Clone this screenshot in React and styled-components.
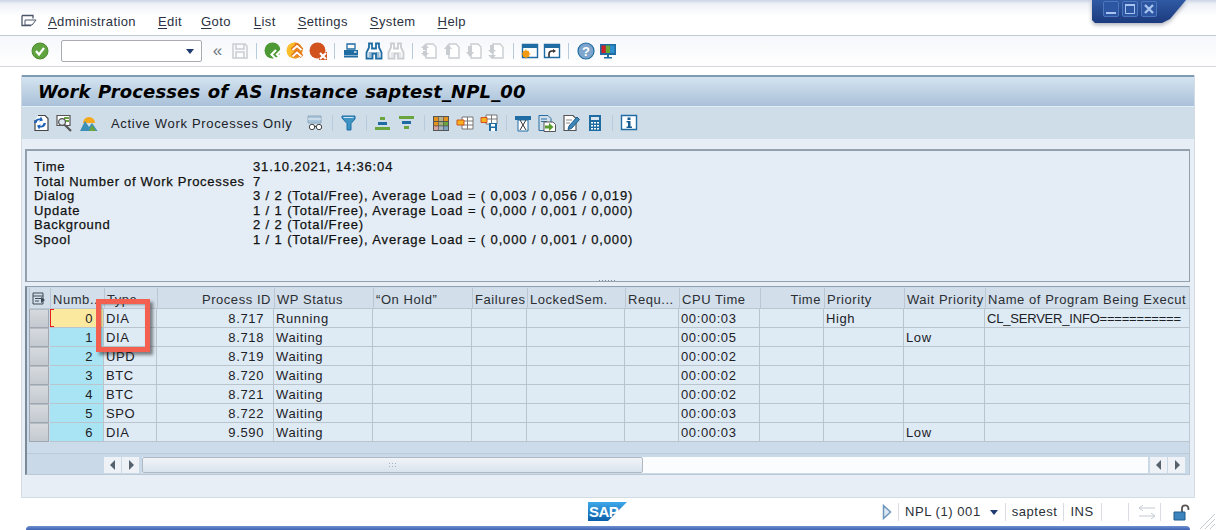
import React from 'react'
import styled, { createGlobalStyle } from 'styled-components'

const GlobalStyle = createGlobalStyle`
  html, body { margin: 0; padding: 0; background: #fff; overflow: hidden; }
  body { font-family: "Liberation Sans", Arial, sans-serif; font-size: 13px; color: #111; }
`

const COLS = '21px 54px 53px 117px 99px 99px 55px 98px 54px 81px 64px 80px 81px 205px'

const Page = styled.div`
  width: 1216px;
  height: 530px;
  display: flex;
  flex-direction: column;
  position: relative;
  overflow: hidden;
`

const MenuBar = styled.div`
  height: 36px;
  flex: none;
  box-sizing: border-box;
  padding: 7px 0 0 21px;
  display: flex;
  align-items: center;
  border-bottom: 1px solid #c3cbd9;
  background: linear-gradient(#ccd5e6 0, #eef1f7 4px, #fff 16px, #fff 100%);
`

const MenuGlyph = styled.span`
  display: flex;
  width: 27px;
`

const MenuItem = styled.span`
  margin-right: ${p => p.$gap}px;
  letter-spacing: 0.4px;
  color: #2a3142;
  u { text-underline-offset: 2px; }
`

const Toolbar = styled.div`
  height: 31px;
  flex: none;
  box-sizing: border-box;
  padding-left: ${p => p.$left}px;
  display: flex;
  align-items: center;
  border-bottom: 1px solid #d3d6de;
  background: linear-gradient(#f6f7fb, #fff);
`

const Slot = styled.span`
  width: 22.4px;
  height: 20px;
  flex: none;
  display: flex;
  align-items: center;
  justify-content: center;
`

const Sep = styled.span`
  width: 1px;
  height: 16px;
  margin: 0 ${p => p.$m || 5}px;
  flex: none;
  background: #b7cbdd;
`

const CommandField = styled.div`
  width: 141px;
  height: 22px;
  margin: 0 4px 0 10px;
  flex: none;
  box-sizing: border-box;
  border: 1px solid #a9adb3;
  border-radius: 2px;
  background: #fff;
  display: flex;
  align-items: center;
  justify-content: flex-end;
  padding-right: 7px;
`

const DropArrow = styled.span`
  width: 0;
  height: 0;
  flex: none;
  border-left: 4px solid transparent;
  border-right: 4px solid transparent;
  border-top: 5px solid #1f3a6e;
`

const Chevrons = styled.span`
  width: 22px;
  flex: none;
  text-align: center;
  font-size: 17px;
  line-height: 18px;
  color: #6f7780;
`

const Screen = styled.main`
  flex: 1;
  min-height: 0;
  margin: 8px 21px 0;
  width: 1174px;
  display: flex;
  flex-direction: column;
  box-sizing: border-box;
  border: 1px solid #d5dbe3;
  border-top: 0;
  background: #e8eef6;
`

const TitleBar = styled.h1`
  margin: 0;
  height: 31px;
  flex: none;
  box-sizing: border-box;
  border-top: 2px solid #7f9ab4;
  padding: 2px 0 0 16px;
  background: linear-gradient(#d4e3ef, #a9c1d9);
  font: italic bold 18px "DejaVu Sans", sans-serif;
  letter-spacing: 0.13px;
  word-spacing: 1px;
  line-height: 25px;
  color: #000;
  white-space: nowrap;
`

const AppBar = styled.div`
  height: 33px;
  flex: none;
  box-sizing: border-box;
  padding: 0 0 1px 7px;
  display: flex;
  align-items: center;
  border-top: 1px solid #e3edf5;
  background: #cedde8;
`

const BarSlot = styled(Slot)`
  width: 24px;
`

const BarText = styled.span`
  width: 202px;
  flex: none;
  padding: 2px 0 0 10px;
  box-sizing: border-box;
  letter-spacing: 0.68px;
  color: #1c2126;
`

const InfoBox = styled.section`
  height: 133px;
  flex: none;
  margin: 10px 4px 0 3px;
  box-sizing: border-box;
  border: 1px solid #93a1ae;
  border-top-width: 2px;
  border-left-width: 2px;
  padding: 9px 0 0 7px;
  background: #e4edf5;
  position: relative;
`

const InfoRow = styled.div`
  display: grid;
  grid-template-columns: 219px 1fr;
  height: 14.6px;
  line-height: 14.6px;
  white-space: pre;
  -webkit-text-stroke: 0.25px #111;
`

const InfoKey = styled.span`
  letter-spacing: 0.7px;
`

const InfoValue = styled.span`
  letter-spacing: 0.87px;
`

const Sash = styled.span`
  position: absolute;
  left: 571px;
  bottom: -1px;
  width: 18px;
  height: 3px;
  background: radial-gradient(circle, #7d8a96 0.7px, transparent 1px) 0 0 / 3px 3px;
`

const GridFrame = styled.section`
  height: 189px;
  flex: none;
  margin: 4px 4px 0 3px;
  box-sizing: border-box;
  border-top: 1px solid #93a1ae;
  border-left: 2px solid #7a8a99;
  border-right: 1px solid #bcc8d4;
  border-bottom: 1px solid #bcc8d4;
  padding: 1px 0 0 2px;
  background: #cbdbe9;
  overflow: hidden;
`

const HeadRow = styled.div`
  display: grid;
  grid-template-columns: ${COLS};
  height: 21px;
`

const HeadCell = styled.div`
  box-sizing: border-box;
  padding: 0 ${p => (p.$right ? 3 : 1)}px 0 2px;
  line-height: 23px;
  text-align: ${p => (p.$right ? 'right' : 'left')};
  letter-spacing: 0.55px;
  white-space: nowrap;
  overflow: hidden;
  color: #2b2f33;
  background: #d2deea;
  border-left: 1px solid #bac6d2;
  border-bottom: 1px solid #bac6d2;
`

const DataRow = styled.div`
  display: grid;
  grid-template-columns: ${COLS};
  height: 19px;
`

const RowButton = styled.div`
  box-sizing: border-box;
  margin-right: 1px;
  border: 1px solid #9fa8b0;
  border-top-color: #b4bcc3;
  background: linear-gradient(#d6dadf, #c3c9cf);
`

const Cell = styled.div`
  box-sizing: border-box;
  padding: 0 ${p => (p.$right ? 9 : 1)}px 0 2px;
  line-height: 20px;
  text-align: ${p => (p.$right ? 'right' : 'left')};
  letter-spacing: 0.62px;
  white-space: nowrap;
  overflow: hidden;
  color: #1d2125;
  background: #deebf5;
  border-right: 1px solid #b9c4cd;
  border-bottom: 1px solid #b9c4cd;
`

const ProgramCell = styled(Cell)`
  letter-spacing: -0.2px;
`

const KeyCell = styled(Cell)`
  position: relative;
  padding-right: 10px;
  text-align: right;
  background: ${p => (p.$current ? '#fbe9a0' : '#a8e4f4')};
`

const CursorMark = styled.span`
  position: absolute;
  left: 0;
  top: 0;
  bottom: 0;
  width: 3px;
  border: 1px solid #e5201c;
  border-right: 0;
  background: transparent;
  clip-path: polygon(0 0, 100% 0, 100% 3px, 2px 3px, 2px calc(100% - 3px), 100% calc(100% - 3px), 100% 100%, 0 100%);
`

const ScrollRow = styled.div`
  height: 22px;
  margin: 11px 0 0 -2px;
  box-sizing: border-box;
  padding: 2px 3px 2px 77px;
  border-top: 1px solid #bccad7;
  display: flex;
  align-items: center;
  background: #c9d9e7;
`

const ScrollBtn = styled.span`
  width: 17px;
  height: 16px;
  margin-right: 1px;
  flex: none;
  display: flex;
  align-items: center;
  justify-content: center;
  background: #eef2f7;
`

const Track = styled.div`
  flex: 1;
  height: 16px;
  margin: 0 2px 0 2px;
  display: flex;
  background: #fbfcfd;
`

const Thumb = styled.div`
  width: 501px;
  box-sizing: border-box;
  border: 1px solid #aeb9c4;
  border-radius: 2px;
  background: linear-gradient(#f0f4f8, #d9e3ec);
  display: flex;
  align-items: center;
  justify-content: center;
`

const Grip = styled.span`
  width: 9px;
  height: 6px;
  background: radial-gradient(circle, #a3afba 0.7px, transparent 1px) 0 0 / 3px 3px;
`

const StatusBar = styled.footer`
  height: 28px;
  flex: none;
  display: grid;
  grid-template-columns: 587px 40px 256px 1fr;
  align-items: center;
  background: #fff;
`

const StatusRight = styled.div`
  grid-column: 4;
  display: flex;
  align-items: center;
  letter-spacing: 0.55px;
  color: #2a2f38;
  white-space: nowrap;
`

const StatusText = styled.span`
  padding: 0 ${p => p.$r || 6}px 0 6px;
  height: 18px;
  line-height: 18px;
  border-left: 1px solid #d9dde3;
`

const ArrowGap = styled.span`
  width: ${p => p.$w}px;
  flex: none;
`

const BottomStrip = styled.div`
  height: 4px;
  flex: none;
  margin: 0 26px;
  border-radius: 6px 6px 0 0;
  background: linear-gradient(#6e8fd0, #3f62b0);
`

const ControlsShadow = styled.div`
  position: absolute;
  top: 0;
  left: 1092px;
  filter: drop-shadow(0 2px 2px rgba(20, 30, 60, 0.35));
`

const WindowControls = styled.div`
  width: 94px;
  height: 23px;
  box-sizing: border-box;
  padding: 1px 0 0 11px;
  display: flex;
  gap: 3px;
  background: linear-gradient(#2f5aa3, #1c3a7e);
  clip-path: polygon(0 0, 100% 0, 78px 19px, 70px 23px, 3px 23px, 0 20px);
`

const WinBtn = styled.span`
  width: 16px;
  height: 16px;
  box-sizing: border-box;
  border: 1px solid #4d76bd;
  border-radius: 2px;
  background: #2c55a2;
  display: flex;
  align-items: center;
  justify-content: center;
`

const Highlight = styled.div`
  position: absolute;
  left: 96px;
  top: 299px;
  width: 54px;
  height: 53px;
  box-sizing: border-box;
  border: 5px solid #f4604f;
  box-shadow: 3px 3px 3px rgba(40, 40, 40, 0.55), inset 1px 1px 2px rgba(40, 40, 40, 0.35);
`

const ResizeGrip = styled.svg`
  position: absolute;
  right: 0;
  bottom: 0;
`

const Ico = ({ children, s = 18 }) => (
  <svg width={s} height={s} viewBox="0 0 18 18" fill="none" style={{ overflow: 'visible' }}>{children}</svg>
)

const BLUE = '#1f6ca3'
const GREY = '#c9cdd1'

const icons = {
  ok: (
    <Ico>
      <circle cx="9" cy="9" r="8" fill="#5fa43e" stroke="#4c8a30" />
      <path d="M5 9l3 3.500 5-6.500" stroke="#fff" strokeWidth="2.200" />
    </Ico>
  ),
  save: (
    <Ico>
      <path d="M2 2h12l2 2v12H2z" stroke={GREY} strokeWidth="1.500" />
      <path d="M5 2v5h8V2M5 16v-6h8v6" stroke={GREY} strokeWidth="1.500" />
    </Ico>
  ),
  back: (
    <Ico>
      <circle cx="8.500" cy="8.500" r="8" fill="#4d9a35" />
      <path d="M12 8l-4.500 4.500L12 17M17.500 8L13 12.500l4.500 4.500" stroke="#fff" strokeWidth="2.200" />
    </Ico>
  ),
  exit: (
    <Ico>
      <circle cx="8.500" cy="8.500" r="8" fill="#fbbd2a" />
      <path d="M8.500 0.500a8 8 0 0 1 0 16z" fill="#ee8f1d" />
      <path d="M6 8l5-4.500L16 8M6 14.500L11 10l5 4.500" stroke="#e2741a" strokeWidth="4" />
      <path d="M6.500 8L11 4l4.500 4M6.500 14.500L11 10.500l4.500 4" stroke="#fff" strokeWidth="1.800" />
    </Ico>
  ),
  cancel: (
    <Ico>
      <circle cx="8.500" cy="8.500" r="8" fill="#d1521d" />
      <path d="M10 10h8v8h-8z" fill="#d1521d" />
      <path d="M11 11l6 6M17 11l-6 6" stroke="#fff" strokeWidth="2.200" />
    </Ico>
  ),
  print: (
    <Ico>
      <path d="M5 2h8v5H5z" stroke={BLUE} strokeWidth="1.300" />
      <path d="M2 8h14v5H2z" fill={BLUE} />
      <path d="M2 14.500h14" stroke={BLUE} strokeWidth="2" />
      <path d="M12 10h2.500" stroke="#fff" strokeWidth="1.300" />
    </Ico>
  ),
  find: c => (
    <Ico>
      <path d="M4 1.500h3v5h4v-5h3v4l2.500 5v6h-5.500v-5H7.500v5H1.500v-6l2.500-5z" fill="#fff" stroke={c} strokeWidth="1.800" />
      <path d="M3.500 10h3.500v5H3.500zM11 10h3.500v5H11z" fill={c} opacity="0.45" />
    </Ico>
  ),
  page: (mark, fill) => (
    <Ico>
      <path d="M6 2h7l3 3v11H6z" stroke={GREY} strokeWidth="1.400" fill="#fff" />
      <path d={mark} fill={fill || GREY} />
    </Ico>
  ),
  newSession: (
    <Ico>
      <path d="M1.500 2.500h15v13h-15z" stroke={BLUE} strokeWidth="1.400" fill="#fff" />
      <path d="M1 2h16v4H1z" fill={BLUE} />
      <circle cx="5" cy="12" r="3.400" fill="#f59b12" />
      <path d="M5 7.500v9M0.500 12h9M2 9l6 6M8 9l-6 6" stroke="#f59b12" />
    </Ico>
  ),
  shortcut: (
    <Ico>
      <path d="M1.500 2.500h15v13h-15z" stroke={BLUE} strokeWidth="1.400" fill="#fff" />
      <path d="M1 2h16v4H1z" fill={BLUE} />
      <path d="M6 15v-3q0-3 3-3h2" stroke="#333" strokeWidth="1.600" />
      <path d="M10 7l3 2-3 2z" fill="#333" />
    </Ico>
  ),
  help: (
    <Ico>
      <circle cx="9" cy="9" r="8" fill="#7ea6cc" stroke={BLUE} strokeWidth="1.200" />
      <text x="9" y="13.500" textAnchor="middle" fontSize="13" fontWeight="700" fontFamily="Liberation Sans" fill="#fff">?</text>
    </Ico>
  ),
  monitor: (
    <Ico>
      <path d="M1 2h16v11H1z" fill={BLUE} />
      <path d="M2.500 3.500h4.300V11H2.500z" fill="#d31f26" />
      <path d="M6.800 3.500h4.400V11H6.800z" fill="#68a933" />
      <path d="M11.200 3.500h4.300V11h-4.300z" fill="#2f8fd0" />
      <path d="M8 13h2v2h3v1.500H5V15h3z" fill={BLUE} />
    </Ico>
  ),
  refresh: (
    <Ico>
      <path d="M6 1.500h7l3 3v12H3V6" stroke="#444" strokeWidth="1.200" fill="#fff" />
      <path d="M2 9q1-5 6-4.500l1-2 2 4-4 1 1-1.500q-3 0-3.500 3zM14 9q-1 5-6 4.500l-1 2-2-4 4-1-1 1.500q3 0 3.500-3z" fill="#1d62b8" />
    </Ico>
  ),
  inspect: (
    <Ico>
      <path d="M1 1.500h13v10H1z" stroke="#555" strokeWidth="1.200" fill="#fff" />
      <path d="M8 3h5v2H8zM8 6h5v2H8z" fill="#6aa63d" />
      <circle cx="6" cy="8" r="3.400" fill="#dbe7ef" stroke="#555" strokeWidth="1.200" />
      <path d="M9 11l6 6" stroke="#555" strokeWidth="2.200" />
    </Ico>
  ),
  mountain: (
    <Ico>
      <path d="M3 9a6 6 0 0 1 12 0z" fill="#f6a81c" />
      <path d="M0 17L5 7l4 6 3-4 5.500 8z" fill="#3c8fb7" />
      <path d="M9 17l3-6 4 6z" fill="#6aa63d" />
    </Ico>
  ),
  glasses: (
    <Ico>
      <path d="M2 2h13v7H2z" fill="#a9c5db" stroke="#8fa9be" />
      <path d="M2 5h13" stroke="#eef4f8" />
      <circle cx="6" cy="13" r="2.700" stroke="#444" fill="#fff" />
      <circle cx="13" cy="13" r="2.700" stroke="#444" fill="#fff" />
      <path d="M8.500 12.500h2" stroke="#444" />
    </Ico>
  ),
  filter: (
    <Ico>
      <path d="M2 2h13v3l-4 4.500V16H7V9.500L2 4z" fill="#3d94c4" stroke={BLUE} />
      <path d="M3.500 3.500h10" stroke="#cfe5f2" />
    </Ico>
  ),
  sortUp: (
    <Ico>
      <path d="M6 3h5v3H6z" fill="#6aa63d" />
      <path d="M4 8h9v3H4z" fill="#1f6ca3" />
      <path d="M1 13h15v3H1z" fill="#6aa63d" />
    </Ico>
  ),
  sortDown: (
    <Ico>
      <path d="M1 2h15v3H1z" fill="#6aa63d" />
      <path d="M4 7h9v3H4z" fill="#1f6ca3" />
      <path d="M6 12h5v3H6z" fill="#6aa63d" />
    </Ico>
  ),
  layout: (
    <Ico>
      <path d="M1 2h16v15H1z" fill="#555" />
      <path d="M2 3h4.300v4H2z" fill="#e3931c" /><path d="M7 3h4v4H7z" fill="#b7b28b" /><path d="M11.700 3H16v4h-4.300z" fill="#e3931c" />
      <path d="M2 8h4.300v3.500H2z" fill="#e3931c" /><path d="M7 8h4v3.500H7z" fill="#9fb07c" /><path d="M11.700 8H16v3.500h-4.300z" fill="#6aa63d" />
      <path d="M2 12.300h4.300V16H2z" fill="#d8a3a3" /><path d="M7 12.300h4V16H7z" fill="#a6b6c2" /><path d="M11.700 12.300H16V16h-4.300z" fill="#7fa3bf" />
    </Ico>
  ),
  select: (
    <Ico>
      <path d="M6 3h11v12H6zM6 7h11M6 11h11M11.500 3v12" stroke="#777" fill="#fff" />
      <path d="M1 6h7v5H1z" fill="#f5b21c" stroke="#d1521d" />
    </Ico>
  ),
  saveLayout: (
    <Ico>
      <path d="M6 1h11v9H6zM6 5h11M11.500 1v9" stroke="#777" fill="#fff" />
      <path d="M1 3.500h6v5H1z" fill="#f5b21c" stroke="#d1521d" />
      <path d="M9 9h8v8H9z" fill={BLUE} />
      <path d="M11 10h4v2.500h-4zM11 14h4v3h-4z" fill="#fff" />
    </Ico>
  ),
  hourglass: (
    <Ico>
      <path d="M1 2h16v4H1z" fill={BLUE} />
      <path d="M4 6h10v11H4z" fill="#fff" stroke={BLUE} />
      <path d="M6 6l3 5 3-5M6 16l3-5 3 5" stroke="#333" />
    </Ico>
  ),
  exportDoc: (
    <Ico>
      <path d="M1 1.500h9l3 3v12H1z" fill="#cfe0ec" stroke="#2c6d9e" />
      <path d="M3 5h6M3 7.500h6" stroke="#2c6d9e" />
      <path d="M6 8h9l2.500 2.500v7H6z" fill="#fff" stroke="#555" />
      <path d="M7 11.500h4V9l4.500 4-4.500 4v-2.500H7z" fill="#5b9c2e" />
    </Ico>
  ),
  pencil: (
    <Ico>
      <path d="M2 1.500h9l3 3v12H2z" fill="#fff" stroke="#555" strokeWidth="1.200" />
      <path d="M4 6h6M4 9h4" stroke="#888" />
      <path d="M15 3l2.500 2.500-8 9-3.500 1 1-3.500z" fill="#3d86b8" stroke="#1f5d8a" />
    </Ico>
  ),
  calc: (
    <Ico>
      <path d="M3 1h12v16H3z" fill={BLUE} />
      <path d="M5 3h8v3H5z" fill="#d7e6f0" />
      <path d="M5 8h2v1.500H5zM8 8h2v1.500H8zM11 8h2v1.500h-2zM5 11h2v1.500H5zM8 11h2v1.500H8zM11 11h2v1.500h-2zM5 14h2v1.500H5zM8 14h2v1.500H8zM11 14h2v1.500h-2z" fill="#fff" />
    </Ico>
  ),
  info: (
    <Ico>
      <path d="M1.500 1.500h15v14h-15z" fill="#fff" stroke={BLUE} strokeWidth="1.400" />
      <path d="M7.500 3.500h3v2.500h-3zM6.500 7h4v5.500h1.500v1.500H6.500v-1.500h1.500V8.500H6.500z" fill="#175d92" />
    </Ico>
  ),
}

const tri = dir => (
  <svg width="8" height="10" viewBox="0 0 8 10">
    <path d={dir === 'l' ? 'M6 0v10L1 5z' : 'M2 0v10l5-5z'} fill="#55626e" />
  </svg>
)

const rows = [
  { n: 0, type: 'DIA', pid: '8.717', status: 'Running', cpu: '00:00:03', prio: 'High', wait: '', prog: 'CL_SERVER_INFO===========', current: true },
  { n: 1, type: 'DIA', pid: '8.718', status: 'Waiting', cpu: '00:00:05', prio: '', wait: 'Low', prog: '' },
  { n: 2, type: 'UPD', pid: '8.719', status: 'Waiting', cpu: '00:00:02', prio: '', wait: '', prog: '' },
  { n: 3, type: 'BTC', pid: '8.720', status: 'Waiting', cpu: '00:00:02', prio: '', wait: '', prog: '' },
  { n: 4, type: 'BTC', pid: '8.721', status: 'Waiting', cpu: '00:00:02', prio: '', wait: '', prog: '' },
  { n: 5, type: 'SPO', pid: '8.722', status: 'Waiting', cpu: '00:00:03', prio: '', wait: '', prog: '' },
  { n: 6, type: 'DIA', pid: '9.590', status: 'Waiting', cpu: '00:00:03', prio: '', wait: 'Low', prog: '' },
]

const info = [
  ['Time', '31.10.2021, 14:36:04'],
  ['Total Number of Work Processes', '7'],
  ['Dialog', '3 / 2 (Total/Free), Average Load = ( 0,003 / 0,056 / 0,019)'],
  ['Update', '1 / 1 (Total/Free), Average Load = ( 0,000 / 0,001 / 0,000)'],
  ['Background', '2 / 2 (Total/Free)'],
  ['Spool', '1 / 1 (Total/Free), Average Load = ( 0,000 / 0,001 / 0,000)'],
]

const menu = [
  ['A', 'dministration', 22],
  ['E', 'dit', 19],
  ['G', 'oto', 23],
  ['L', 'ist', 22],
  ['S', 'ettings', 22],
  ['S', 'ystem', 22],
  ['H', 'elp', 0],
]

const heads = [
  ['Numb..'], ['Type'], ['Process ID', true], ['WP Status'], ['“On Hold”'], ['Failures'],
  ['LockedSem.'], ['Requ...'], ['CPU Time'], ['Time', true], ['Priority'], ['Wait Priority'],
  ['Name of Program Being Execut'],
]

const S = ({ children }) => <Slot>{children}</Slot>
const B = ({ children }) => <BarSlot>{children}</BarSlot>

export default function App() {
  return (
    <Page>
      <GlobalStyle />
      <MenuBar>
        <MenuGlyph>
          <svg width="16" height="14" viewBox="0 0 16 14" fill="none">
            <path d="M1 1.500h11v3M1 1.500v10h9" stroke="#4a5568" strokeWidth="1.300" />
            <path d="M4 6h11l-4 5H4z" fill="#fff" stroke="#4a5568" />
          </svg>
        </MenuGlyph>
        {menu.map(([k, rest, gap]) => (
          <MenuItem key={k + rest} $gap={gap}><u>{k}</u>{rest}</MenuItem>
        ))}
      </MenuBar>

      <Toolbar $left={29}>
        <S>{icons.ok}</S>
        <CommandField><DropArrow /></CommandField>
        <Chevrons>«</Chevrons>
        <S>{icons.save}</S>
        <Sep />
        <S>{icons.back}</S>
        <S>{icons.exit}</S>
        <S>{icons.cancel}</S>
        <Sep />
        <S>{icons.print}</S>
        <S>{icons.find(BLUE)}</S>
        <S>{icons.find(GREY)}</S>
        <Sep />
        <S>{icons.page('M1 6l4-4 4 4H7v2H3V6zM1 11l4 4 4-4H7V9H3v2z')}</S>
        <S>{icons.page('M1 7l4-5 4 5H7v6H3V7z')}</S>
        <S>{icons.page('M1 10l4 5 4-5H7V4H3v6z')}</S>
        <S>{icons.page('M1 8l4 4 4-4H7V3H3v5zM1 13l4 4 4-4z')}</S>
        <Sep />
        <S>{icons.newSession}</S>
        <S>{icons.shortcut}</S>
        <Sep />
        <S>{icons.help}</S>
        <S>{icons.monitor}</S>
      </Toolbar>

      <Screen>
        <TitleBar>Work Processes of AS Instance saptest_NPL_00</TitleBar>
        <AppBar>
          <B>{icons.refresh}</B>
          <B>{icons.inspect}</B>
          <B>{icons.mountain}</B>
          <BarText>Active Work Processes Only</BarText>
          <B>{icons.glasses}</B>
          <Sep $m={4.5} />
          <B>{icons.filter}</B>
          <Sep $m={4.5} />
          <B>{icons.sortUp}</B>
          <B>{icons.sortDown}</B>
          <Sep $m={4.5} />
          <B>{icons.layout}</B>
          <B>{icons.select}</B>
          <B>{icons.saveLayout}</B>
          <Sep $m={4.5} />
          <B>{icons.hourglass}</B>
          <B>{icons.exportDoc}</B>
          <B>{icons.pencil}</B>
          <B>{icons.calc}</B>
          <Sep $m={4.5} />
          <B>{icons.info}</B>
        </AppBar>

        <InfoBox>
          {info.map(([k, v]) => (
            <InfoRow key={k}><InfoKey>{k}</InfoKey><InfoValue>{v}</InfoValue></InfoRow>
          ))}
          <Sash />
        </InfoBox>

        <GridFrame>
          <HeadRow>
            <HeadCell>
              <svg width="14" height="13" viewBox="0 0 14 13" fill="none" style={{ marginTop: 4 }}>
                <path d="M1 1h10v11H1zM1 4h10M3 6.500h6M3 9h4" stroke="#3f4a55" />
                <path d="M9 5l4 3-4 3z" fill="#3f4a55" />
              </svg>
            </HeadCell>
            {heads.map(([h, right]) => <HeadCell key={h} $right={right}>{h}</HeadCell>)}
          </HeadRow>
          {rows.map(r => (
            <DataRow key={r.n}>
              <RowButton />
              <KeyCell $current={r.current}>
                {r.current && <CursorMark />}
                {r.n}
              </KeyCell>
              <Cell>{r.type}</Cell>
              <Cell $right>{r.pid}</Cell>
              <Cell>{r.status}</Cell>
              <Cell /><Cell /><Cell /><Cell />
              <Cell>{r.cpu}</Cell>
              <Cell />
              <Cell>{r.prio}</Cell>
              <Cell>{r.wait}</Cell>
              <ProgramCell>{r.prog}</ProgramCell>
            </DataRow>
          ))}
          <ScrollRow>
            <ScrollBtn>{tri('l')}</ScrollBtn>
            <ScrollBtn>{tri('r')}</ScrollBtn>
            <Track><Thumb><Grip /></Thumb></Track>
            <ScrollBtn>{tri('l')}</ScrollBtn>
            <ScrollBtn>{tri('r')}</ScrollBtn>
          </ScrollRow>
        </GridFrame>
      </Screen>

      <StatusBar>
        <span />
        <svg width="40" height="20" viewBox="0 0 40 20">
          <defs>
            <linearGradient id="sapBlue" x1="0" y1="0" x2="0" y2="1">
              <stop offset="0" stopColor="#3ea7ea" />
              <stop offset="1" stopColor="#0b5fa9" />
            </linearGradient>
          </defs>
          <path d="M1 0h39L21 19H1z" fill="url(#sapBlue)" />
          <text x="2" y="15" fontSize="15" fontWeight="700" fontFamily="Liberation Sans" letterSpacing="-0.6" fill="#fff">SAP</text>
        </svg>
        <span />
        <StatusRight>
          <svg width="10" height="16" viewBox="0 0 10 16" style={{ marginLeft: -1, marginRight: 6 }}>
            <path d="M1.500 1.500L8.500 8l-7 6.500z" fill="#dce9f5" stroke="#6f97bd" strokeWidth="1.500" />
          </svg>
          <StatusText>NPL (1) 001</StatusText>
          <ArrowGap $w={3} />
          <DropArrow />
          <ArrowGap $w={7} />
          <StatusText>saptest</StatusText>
          <StatusText $r={7}>INS</StatusText>
          <StatusText $r={20} />
          <StatusText $r={3} />
          <svg width="18" height="14" viewBox="0 0 18 14" fill="none" style={{ marginRight: 4 }}>
            <path d="M1 3h16M1 11h16M5 0L1 3l4 3M13 8l4 3-4 3" stroke="#c5cad0" />
          </svg>
          <StatusText $r={0} />
          <svg width="18" height="17" viewBox="0 0 18 17" fill="none">
            <path d="M9 8V4.500a3.200 3.200 0 0 1 6.400 0V6" stroke="#555" strokeWidth="1.800" />
            <path d="M1 8h11v8H1z" fill="#3c84bd" stroke="#1f5d8a" />
          </svg>
        </StatusRight>
      </StatusBar>
      <BottomStrip />

      <ControlsShadow>
        <WindowControls>
          <WinBtn>
            <svg width="12" height="12" viewBox="0 0 12 12"><path d="M1 10h10" stroke="#a8c3f0" strokeWidth="2" /></svg>
          </WinBtn>
          <WinBtn>
            <svg width="12" height="12" viewBox="0 0 12 12" fill="none"><path d="M1.500 2.500h9v8h-9z" stroke="#a8c3f0" /><path d="M1 2h10" stroke="#a8c3f0" strokeWidth="2" /></svg>
          </WinBtn>
          <WinBtn>
            <svg width="12" height="12" viewBox="0 0 12 12"><path d="M2 2l8 8M10 2l-8 8" stroke="#a8c3f0" strokeWidth="2.400" /></svg>
          </WinBtn>
        </WindowControls>
      </ControlsShadow>

      <Highlight />

      <ResizeGrip width="24" height="24" viewBox="0 0 24 24">
        <path d="M23 8L8 23M23 13L13 23M23 18L18 23" stroke="#c5cad3" />
      </ResizeGrip>
    </Page>
  )
}
